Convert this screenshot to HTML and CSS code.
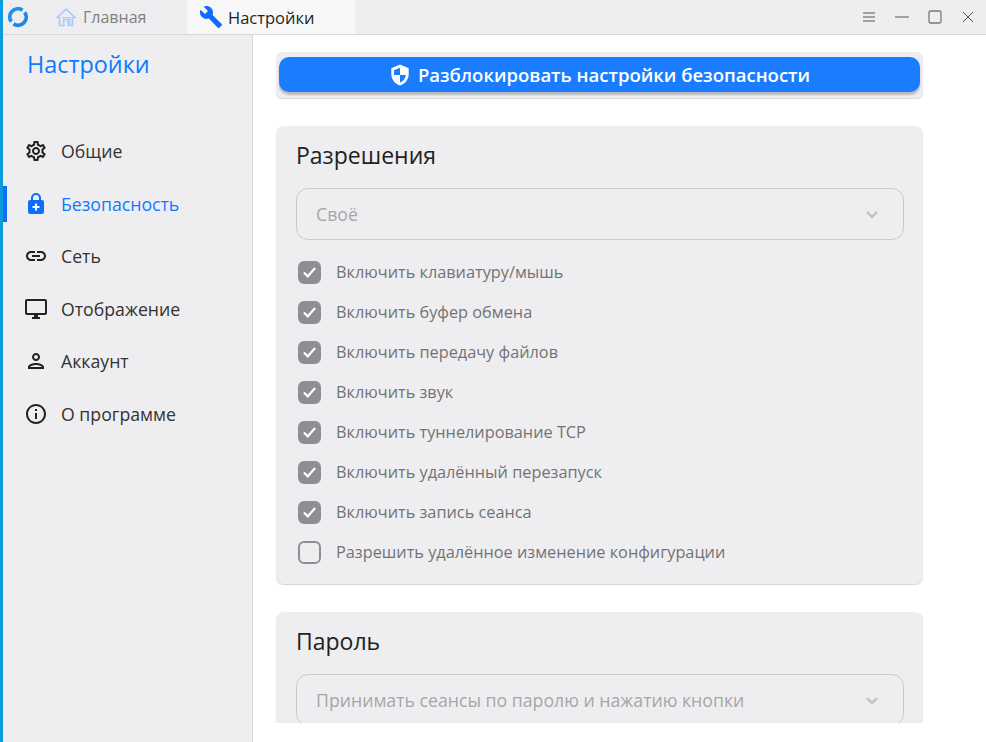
FILE: index.html
```html
<!DOCTYPE html>
<html lang="ru">
<head>
<meta charset="utf-8">
<title>Настройки</title>
<link rel="stylesheet" href="styles.css">
</head>
<body>
<div class="app">
  <header class="titlebar">
    <div class="logo">
      <svg width="22" height="22" viewBox="0 0 22 22" fill="none"><path d="M4.300 15.700A8.200 8.200 0 0 1 15.500 4.100" stroke="#1c93e8" stroke-width="3.800"/><path d="M17.700 6.300A8.200 8.200 0 0 1 6.500 17.900" stroke="#1a86e8" stroke-width="3.800"/></svg>
    </div>
    <div class="tab">
      <svg class="tab-icon" width="22" height="22" viewBox="0 0 22 22" fill="none" stroke="#a9cdfb" stroke-width="1.700"><path d="M2 11.500 11 3.200l9 8.300h-2.500V19.500H13.300V13.500H8.700V19.500H4.500V11.500z"/><path d="M7 11.500h8v8" stroke-width="1.200"/></svg>
      <span class="tab-label">Главная</span>
    </div>
    <div class="tab tab-active">
      <svg class="tab-icon" width="24" height="24" viewBox="0 0 24 24" fill="#0d6efd"><path d="M22.700 19 13.600 9.900c.9-2.300.4-5-1.500-6.900C10.100 1 7.100.6 4.700 1.700L9 6 6 9 1.600 4.700C.4 7.100.9 10.100 2.900 12.100c1.900 1.900 4.600 2.400 6.900 1.500l9.100 9.100c.4.400 1 .4 1.400 0l2.300-2.300c.5-.4.5-1.100.100-1.400z"/></svg>
      <span class="tab-label">Настройки</span>
    </div>
    <div class="window-controls">
      <svg width="14" height="14" viewBox="0 0 14 14" stroke="#555" fill="none"><path d="M1 3h12M1 7h12M1 11h12"/></svg>
      <svg width="14" height="14" viewBox="0 0 14 14" stroke="#555" fill="none"><path d="M0 7h14"/></svg>
      <svg width="14" height="14" viewBox="0 0 14 14" stroke="#777" fill="none" stroke-width="1.300"><rect x="1" y="1" width="12" height="12" rx="1.500"/></svg>
      <svg width="14" height="14" viewBox="0 0 14 14" stroke="#555" fill="none"><path d="M2 2l10 10M12 2 2 12"/></svg>
    </div>
  </header>
  <div class="body">
    <aside class="sidebar">
      <h1 class="side-title">Настройки</h1>
      <nav class="nav">
        <a class="nav-item">
          <svg width="24" height="24" viewBox="0 0 24 24" fill="#222"><path d="M19.430 12.980c.04-.32.07-.64.07-.98s-.03-.66-.07-.98l2.110-1.650c.19-.15.24-.42.120-.64l-2-3.460c-.12-.22-.39-.3-.61-.22l-2.490 1c-.52-.4-1.080-.73-1.690-.98l-.38-2.650C14.460 2.180 14.250 2 14 2h-4c-.25 0-.46.18-.49.420l-.38 2.650c-.61.25-1.170.59-1.690.98l-2.490-1c-.23-.09-.49 0-.61.220l-2 3.460c-.13.220-.07.490.12.640l2.110 1.650c-.04.320-.07.650-.07.980s.03.660.07.980l-2.110 1.650c-.19.150-.24.420-.12.640l2 3.460c.12.220.39.300.61.220l2.490-1c.52.400 1.080.730 1.690.980l.38 2.650c.03.240.24.420.49.420h4c.25 0 .46-.18.49-.42l.38-2.650c.61-.25 1.170-.59 1.690-.98l2.490 1c.23.090.49 0 .61-.22l2-3.460c.12-.22.07-.49-.12-.64l-2.110-1.650zm-1.980-1.710c.04.310.05.520.05.730s-.02.430-.05.730l-.14 1.130.89.700 1.080.840-.7 1.210-1.270-.51-1.040-.42-.9.680c-.43.320-.84.560-1.250.730l-1.060.430-.16 1.130-.2 1.350h-1.400l-.19-1.350-.16-1.130-1.060-.43c-.43-.18-.83-.41-1.230-.71l-.91-.7-1.060.43-1.270.51-.7-1.210 1.080-.84.890-.7-.14-1.130c-.03-.31-.05-.54-.05-.74s.02-.43.05-.73l.14-1.130-.89-.7-1.080-.84.7-1.210 1.270.51 1.040.42.9-.68c.43-.32.84-.56 1.250-.73l1.060-.43.16-1.130.2-1.350h1.390l.19 1.350.16 1.130 1.060.43c.43.180.83.410 1.230.710l.91.700 1.060-.43 1.270-.51.7 1.210-1.070.85-.89.700.14 1.130zM12 8c-2.210 0-4 1.790-4 4s1.790 4 4 4 4-1.790 4-4-1.790-4-4-4zm0 6c-1.100 0-2-.9-2-2s.9-2 2-2 2 .9 2 2-.9 2-2 2z"/></svg>
          <span>Общие</span>
        </a>
        <a class="nav-item nav-active">
          <svg width="24" height="24" viewBox="0 0 24 24"><path fill="#0d6efd" d="M18 8h-1V6A5 5 0 0 0 7 6v2H6a2 2 0 0 0-2 2v10a2 2 0 0 0 2 2h12a2 2 0 0 0 2-2V10a2 2 0 0 0-2-2zM9 6a3 3 0 0 1 6 0v2H9z"/><path stroke="#fff" stroke-width="2" d="M12 11.500v7M8.500 15h7"/></svg>
          <span>Безопасность</span>
        </a>
        <a class="nav-item">
          <svg width="24" height="24" viewBox="0 0 24 24" fill="#222"><path d="M17 7h-4v2h4c1.650 0 3 1.350 3 3s-1.350 3-3 3h-4v2h4c2.760 0 5-2.240 5-5s-2.240-5-5-5zm-6 8H7c-1.650 0-3-1.350-3-3s1.350-3 3-3h4V7H7c-2.760 0-5 2.240-5 5s2.240 5 5 5h4v-2zm-3-4h8v2H8z"/></svg>
          <span>Сеть</span>
        </a>
        <a class="nav-item">
          <svg width="24" height="24" viewBox="0 0 24 24" fill="#222"><path d="M21 2H3c-1.100 0-2 .9-2 2v12c0 1.100.9 2 2 2h7v2H8v2h8v-2h-2v-2h7c1.100 0 2-.9 2-2V4c0-1.100-.9-2-2-2zm0 14H3V4h18v12z"/></svg>
          <span>Отображение</span>
        </a>
        <a class="nav-item">
          <svg width="24" height="24" viewBox="0 0 24 24" fill="#222"><path d="M12 6c1.100 0 2 .9 2 2s-.9 2-2 2-2-.9-2-2 .9-2 2-2m0 10c2.700 0 5.800 1.290 6 2H6c.23-.72 3.310-2 6-2m0-12C9.790 4 8 5.790 8 8s1.790 4 4 4 4-1.790 4-4-1.790-4-4-4zm0 10c-2.670 0-8 1.340-8 4v2h16v-2c0-2.660-5.330-4-8-4z"/></svg>
          <span>Аккаунт</span>
        </a>
        <a class="nav-item">
          <svg width="24" height="24" viewBox="0 0 24 24" fill="#222"><path d="M11 7h2v2h-2zm0 4h2v6h-2zm1-9C6.480 2 2 6.480 2 12s4.480 10 10 10 10-4.480 10-10S17.520 2 12 2zm0 18c-4.410 0-8-3.590-8-8s3.590-8 8-8 8 3.590 8 8-3.590 8-8 8z"/></svg>
          <span>О программе</span>
        </a>
      </nav>
    </aside>
    <main class="main">
      <div class="scroll">
        <section class="card card-unlock">
          <button class="unlock">
            <svg width="24" height="24" viewBox="0 0 24 24"><path fill="#fff" d="M12 .5 2.500 4.500v6.500c0 5.800 4 11 9.500 12.500 5.500-1.500 9.500-6.700 9.500-12.500V4.500z"/><path fill="#1a7dff" d="M12 4 5.500 6.700V12H12zM12 12v8.300c3.400-1.200 5.900-4.500 6.400-8.300z"/></svg>
            <span>Разблокировать настройки безопасности</span>
          </button>
        </section>
        <section class="card">
          <h2 class="card-title">Разрешения</h2>
          <div class="select"><span>Своё</span>
            <svg width="24" height="24" viewBox="0 0 24 24" fill="none" stroke="#c4c4c6" stroke-width="2.500"><path d="M7 10l5 5 5-5"/></svg>
          </div>
          <ul class="checks">
            <li class="check"><span class="box box-on"><svg width="22" height="22" viewBox="0 0 22 22" fill="none" stroke="#fff" stroke-width="2.600"><path d="M4.500 11.500l4.500 4.500 8.500-9.500"/></svg></span>Включить клавиатуру/мышь</li>
            <li class="check"><span class="box box-on"><svg width="22" height="22" viewBox="0 0 22 22" fill="none" stroke="#fff" stroke-width="2.600"><path d="M4.500 11.500l4.500 4.500 8.500-9.500"/></svg></span>Включить буфер обмена</li>
            <li class="check"><span class="box box-on"><svg width="22" height="22" viewBox="0 0 22 22" fill="none" stroke="#fff" stroke-width="2.600"><path d="M4.500 11.500l4.500 4.500 8.500-9.500"/></svg></span>Включить передачу файлов</li>
            <li class="check"><span class="box box-on"><svg width="22" height="22" viewBox="0 0 22 22" fill="none" stroke="#fff" stroke-width="2.600"><path d="M4.500 11.500l4.500 4.500 8.500-9.500"/></svg></span>Включить звук</li>
            <li class="check"><span class="box box-on"><svg width="22" height="22" viewBox="0 0 22 22" fill="none" stroke="#fff" stroke-width="2.600"><path d="M4.500 11.500l4.500 4.500 8.500-9.500"/></svg></span>Включить туннелирование TCP</li>
            <li class="check"><span class="box box-on"><svg width="22" height="22" viewBox="0 0 22 22" fill="none" stroke="#fff" stroke-width="2.600"><path d="M4.500 11.500l4.500 4.500 8.500-9.500"/></svg></span>Включить удалённый перезапуск</li>
            <li class="check"><span class="box box-on"><svg width="22" height="22" viewBox="0 0 22 22" fill="none" stroke="#fff" stroke-width="2.600"><path d="M4.500 11.500l4.500 4.500 8.500-9.500"/></svg></span>Включить запись сеанса</li>
            <li class="check"><span class="box"></span>Разрешить удалённое изменение конфигурации</li>
          </ul>
        </section>
        <section class="card">
          <h2 class="card-title">Пароль</h2>
          <div class="select"><span>Принимать сеансы по паролю и нажатию кнопки</span>
            <svg width="24" height="24" viewBox="0 0 24 24" fill="none" stroke="#c4c4c6" stroke-width="2.500"><path d="M7 10l5 5 5-5"/></svg>
          </div>
        </section>
      </div>
    </main>
  </div>
</div>
</body>
</html>
```
FILE: styles.css
```css
* { box-sizing: border-box; }
html, body { margin: 0; height: 100%; overflow: hidden; }
body {
  font-family: "Open Sans", "Noto Sans", sans-serif;
  background: #fff;
  color: #1f1f1f;
}
.app {
  width: 986px;
  height: 742px;
  display: flex;
  flex-direction: column;
  border-left: 3px solid #0a9bdc;
}
.titlebar {
  height: 35px;
  flex: none;
  display: flex;
  align-items: stretch;
  background: #eeeef0;
  border-bottom: 1px solid #d8d8da;
}
.logo {
  width: 37px;
  display: flex;
  align-items: center;
  padding-left: 4px;
}
.tab {
  width: 147px;
  display: flex;
  align-items: center;
  gap: 6px;
  padding-left: 15px;
  font-size: 16px;
  color: #808080;
}
.tab-active {
  width: 168px;
  background: #f7f7f8;
  color: #1f1f1f;
  font-size: 16.500px;
  padding-left: 12px;
  gap: 5px;
}
.tab-icon { flex: none; }
.window-controls {
  margin-left: auto;
  display: flex;
  align-items: center;
  gap: 19px;
  padding-right: 11px;
}
.body { flex: 1; display: flex; min-height: 0; }
.sidebar {
  width: 250px;
  flex: none;
  background: #eeeef0;
  border-right: 1px solid #d8d8da;
}
.side-title {
  margin: 0;
  padding: 11px 0 0 24px;
  height: 90px;
  font-size: 23.400px;
  font-weight: 400;
  line-height: 36px;
  color: #0d7bfd;
}
.nav { display: flex; flex-direction: column; }
.nav-item {
  height: 52.500px;
  display: flex;
  align-items: center;
  gap: 13px;
  padding-left: 21px;
  font-size: 17.700px;
  color: #333;
  position: relative;
}
.nav-active { color: #0d7bfd; }
.nav-active::before {
  content: "";
  position: absolute;
  left: 0;
  top: 8px;
  bottom: 8px;
  width: 4px;
  background: #0d6efd;
}
.main { flex: 1; min-width: 0; }
.scroll {
  height: 688px;
  overflow: hidden;
  padding: 17px 0 0 23px;
  display: flex;
  flex-direction: column;
  gap: 28px;
}
.card {
  width: 647px;
  flex: none;
  background: #eeeef0;
  border-radius: 8px;
  padding: 12px 19px 12px 20px;
  box-shadow: 0 1px 1px #d6d6d8;
}
.card-unlock {
  height: 46px;
  padding: 5px 3px 0;
  border-radius: 6px;
  box-shadow: 0 1px 1px #d6d6d8;
}
.unlock {
  width: 641px;
  height: 35px;
  border: 0;
  border-radius: 10px;
  background: #1a7dff;
  color: #fff;
  font: 600 18.500px "Open Sans", sans-serif;
  display: flex;
  align-items: center;
  justify-content: center;
  gap: 7px;
  padding: 0;
  box-shadow: 0 3px 2px #b9b9bc;
}
.unlock svg { width: 22px; height: 22px; }
.card-title {
  margin: 0 0 14px;
  font-size: 23px;
  font-weight: 400;
  line-height: 35px;
  color: #222;
}
.select {
  height: 52px;
  margin-top: 15px;
  border: 1.500px solid #c9c9cb;
  border-radius: 12px;
  display: flex;
  align-items: center;
  justify-content: space-between;
  padding: 0 19px;
  font-size: 17.700px;
  color: #a6a6a8;
}
.checks { list-style: none; margin: 12px 0 0; padding: 0 0 0 2px; }
.check {
  height: 40px;
  display: flex;
  align-items: center;
  gap: 15px;
  font-size: 16.300px;
  color: #737375;
}
.box {
  width: 23px;
  height: 23px;
  flex: none;
  border-radius: 6px;
  border: 2px solid #8e8e93;
  display: flex;
  align-items: center;
  justify-content: center;
}
.box-on { background: #8e8e93; }
```
